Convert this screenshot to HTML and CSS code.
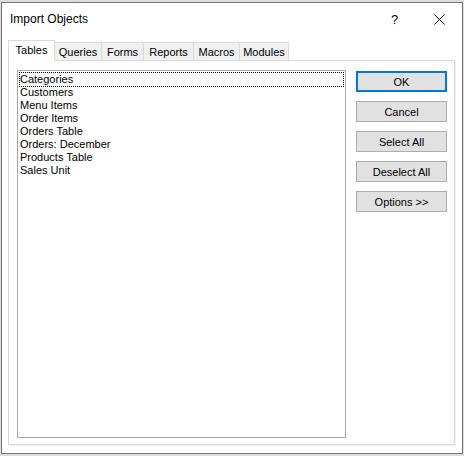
FILE: index.html
```html
<!DOCTYPE html>
<html>
<head>
<meta charset="utf-8">
<link rel="stylesheet" href="styles.css">
</head>
<body>
<div class="window">
  <div class="titlebar">
    <span class="title">Import Objects</span>
    <span class="help">?</span>
    <span class="close">
      <svg width="11" height="11" viewBox="0 0 11 11"><path d="M0.5 0.5 L10.5 10.5 M10.5 0.5 L0.5 10.5" stroke="#000" stroke-width="1" fill="none"/></svg>
    </span>
  </div>
  <div class="content">
    <div class="tabs">
      <div class="tab active t-tables">Tables</div>
      <div class="tab t-queries">Queries</div>
      <div class="tab t-forms">Forms</div>
      <div class="tab t-reports">Reports</div>
      <div class="tab t-macros">Macros</div>
      <div class="tab t-modules">Modules</div>
    </div>
    <div class="panel">
      <div class="listbox">
        <div class="item focus">Categories</div>
        <div class="item">Customers</div>
        <div class="item">Menu Items</div>
        <div class="item">Order Items</div>
        <div class="item">Orders Table</div>
        <div class="item">Orders: December</div>
        <div class="item">Products Table</div>
        <div class="item">Sales Unit</div>
      </div>
      <div class="buttons">
        <div class="btn default">OK</div>
        <div class="btn">Cancel</div>
        <div class="btn">Select All</div>
        <div class="btn">Deselect All</div>
        <div class="btn">Options &gt;&gt;</div>
      </div>
    </div>
  </div>
</div>
</body>
</html>
```

FILE: styles.css
```css
html, body {
  margin: 0;
  padding: 0;
}
body {
  background: #dcdcdc;
  padding: 2px 0 0 1px;
  font-family: "Liberation Sans", Arial, sans-serif;
  color: #000;
  height: 456px;
  box-sizing: border-box;
  overflow: hidden;
}
.window {
  width: 460px;
  height: 450px;
  border: 1px solid #727272;
  background: #fff;
  display: flex;
  flex-direction: column;
}
.titlebar {
  height: 32px;
  flex: none;
  display: flex;
  align-items: center;
  padding-left: 8px;
  font-size: 12px;
}
.title {
  flex: 1;
}
.help {
  width: 12px;
  margin-right: 31px;
  font-size: 13px;
}
.close {
  width: 11px;
  height: 11px;
  margin-right: 17px;
  display: flex;
}
.content {
  flex: 1;
  display: flex;
  flex-direction: column;
  padding: 5px 7px 8px 6px;
}
.tabs {
  display: flex;
  align-items: flex-end;
  height: 20px;
  font-size: 11px;
  position: relative;
  z-index: 1;
}
.tab {
  box-sizing: border-box;
  height: 18px;
  border: 1px solid #d9d9d9;
  border-bottom: none;
  border-left: none;
  background: #f0f0f0;
  text-align: center;
  line-height: 18px;
}
.tab.active {
  height: 21px;
  margin-bottom: -1px;
  background: #fff;
  border-left: 1px solid #d9d9d9;
  line-height: 19px;
  padding-bottom: 1px;
}
.t-tables { width: 47px; }
.t-queries { width: 47px; }
.t-forms { width: 42px; }
.t-reports { width: 50px; }
.t-macros { width: 46px; }
.t-modules { width: 49px; }
.panel {
  flex: 1;
  border: 1px solid #d9d9d9;
  box-shadow: 1px 1px 0 #efefef;
  display: flex;
  padding: 9px 7px 6px 8px;
}
.listbox {
  box-sizing: border-box;
  width: 329px;
  height: 368px;
  border: 1px solid #a8a8a8;
  padding: 2px 1px 0 1px;
  font-size: 11px;
}
.item {
  height: 13px;
  line-height: 13px;
  padding-left: 1px;
}
.item.focus {
  outline: 1px dotted #000;
  outline-offset: 0px;
  margin: 0 1px 0 1px;
  padding-left: 0;
}
.buttons {
  margin-left: 10px;
  margin-top: 1px;
  display: flex;
  flex-direction: column;
  gap: 9px;
}
.btn {
  box-sizing: border-box;
  width: 91px;
  height: 21px;
  border: 1px solid #adadad;
  background: #e1e1e1;
  font-size: 11px;
  display: flex;
  align-items: center;
  justify-content: center;
}
.btn.default {
  border: 2px solid #0078d7;
}
```
